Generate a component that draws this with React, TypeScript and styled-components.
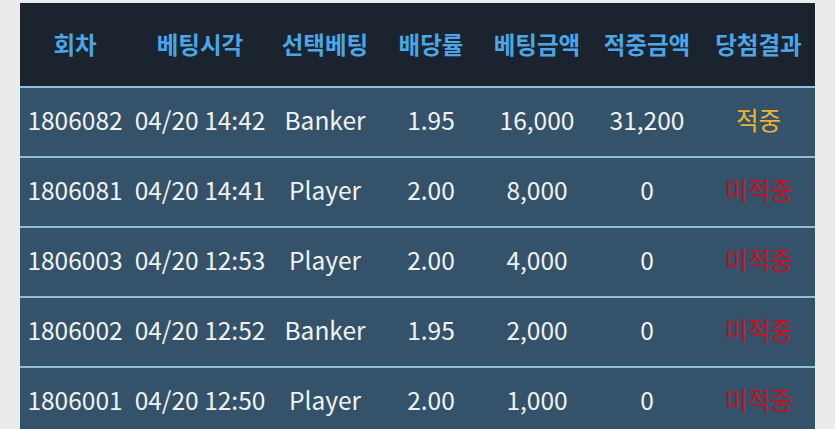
import React from "react";
import styled, { createGlobalStyle } from "styled-components";

const GlobalStyle = createGlobalStyle`
  html, body {
    margin: 0;
    padding: 0;
    background: #ebebeb;
    font-family: "Noto Sans CJK KR", "Noto Sans", sans-serif;
  }
`;

const Page = styled.div`
  padding: 3px 0 0 20px;
  height: 426px;
  overflow: hidden;
`;

const Table = styled.div`
  width: 795px;
  display: flex;
  flex-direction: column;
`;

const cols = "110px 140px 110px 102px 110px 110px 113px";

const HeaderRow = styled.div`
  display: grid;
  grid-template-columns: ${cols};
  height: 83px;
  align-items: center;
  background: #1b242e;
`;

const HeadCell = styled.div`
  text-align: center;
  color: #4ca6e6;
  font-weight: 700;
  font-size: 23.5px;
  padding-bottom: 2px;
  white-space: nowrap;
`;

const Row = styled.div`
  display: grid;
  grid-template-columns: ${cols};
  height: 68px;
  align-items: center;
  background: #34526a;
  border-top: 2px solid #8dbedc;
`;

const Cell = styled.div<{ $tone?: "win" | "lose" }>`
  text-align: center;
  font-size: 24.5px;
  color: ${(p) =>
    p.$tone === "win" ? "#f0b330" : p.$tone === "lose" ? "#c4101e" : "#f2f2f2"};
  white-space: nowrap;
  padding-bottom: 5px;
`;

const headers = ["회차", "베팅시각", "선택베팅", "배당률", "베팅금액", "적중금액", "당첨결과"];

const rows = [
  ["1806082", "04/20 14:42", "Banker", "1.95", "16,000", "31,200", "적중"],
  ["1806081", "04/20 14:41", "Player", "2.00", "8,000", "0", "미적중"],
  ["1806003", "04/20 12:53", "Player", "2.00", "4,000", "0", "미적중"],
  ["1806002", "04/20 12:52", "Banker", "1.95", "2,000", "0", "미적중"],
  ["1806001", "04/20 12:50", "Player", "2.00", "1,000", "0", "미적중"],
];

export default function App() {
  return (
    <>
      <GlobalStyle />
      <Page>
        <Table>
          <HeaderRow>
            {headers.map((h) => (
              <HeadCell key={h}>{h}</HeadCell>
            ))}
          </HeaderRow>
          {rows.map((r) => (
            <Row key={r[0]}>
              {r.map((c, i) => (
                <Cell
                  key={i}
                  $tone={i === 6 ? (c === "적중" ? "win" : "lose") : undefined}
                >
                  {c}
                </Cell>
              ))}
            </Row>
          ))}
        </Table>
      </Page>
    </>
  );
}
